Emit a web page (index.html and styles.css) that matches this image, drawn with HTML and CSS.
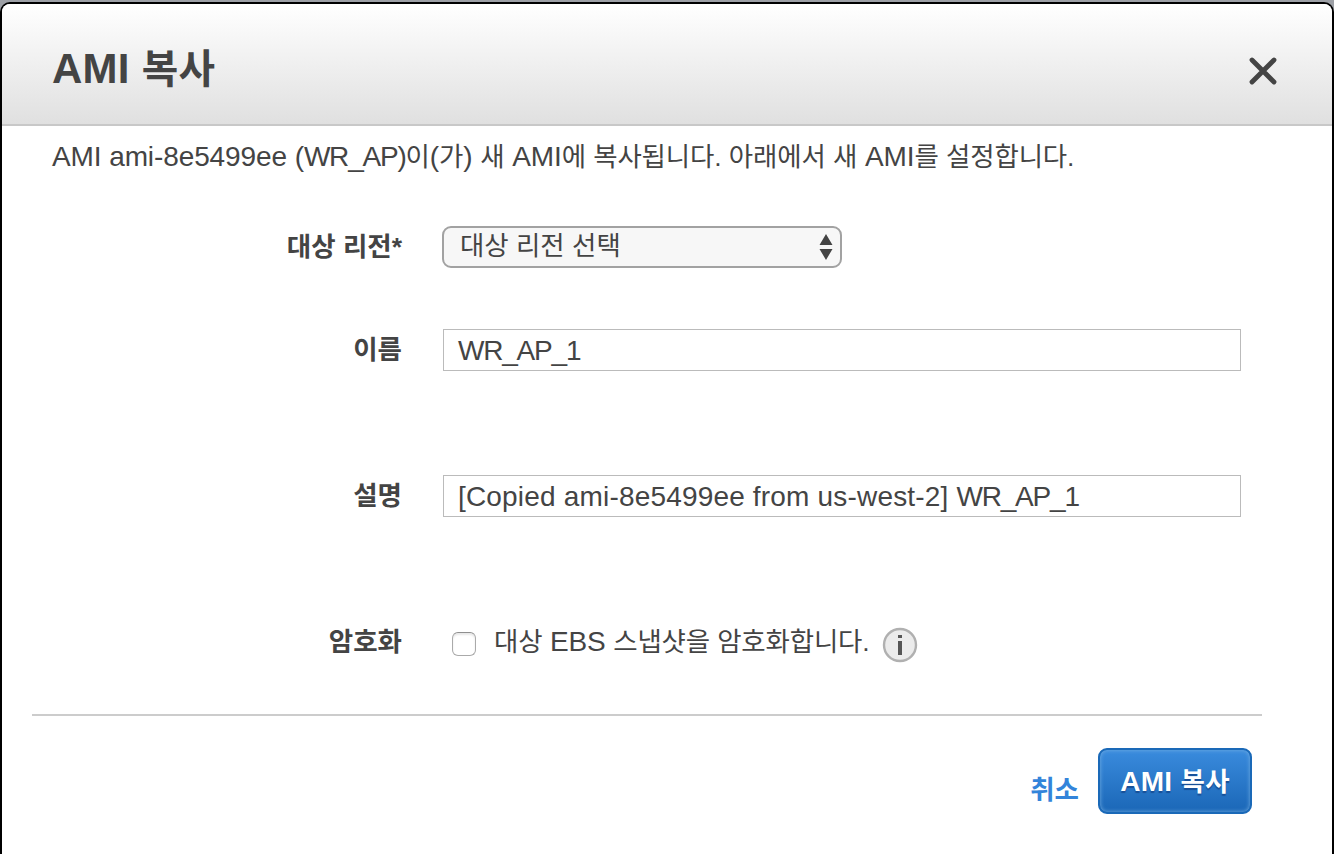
FILE: index.html
```
<!DOCTYPE html>
<html lang="ko">
<head>
<meta charset="utf-8">
<title>AMI 복사</title>
<link rel="stylesheet" href="styles.css">
</head>
<body>
<main class="dialog">
  <header class="header">
    <h1>AMI <span class="ko">복사</span></h1>
    <svg class="close" viewBox="0 0 30 30" width="30" height="30"><path d="M4 4 26 26M26 4 4 26"/></svg>
  </header>
  <p class="intro">AMI ami-8e5499ee (<span class="tight">WR_AP)</span><span class="ko">이</span>(<span class="ko">가</span>) <span class="ko">새</span> AMI<span class="ko">에 복사됩니다. 아래에서 새</span> AMI<span class="ko">를 설정합니다.</span></p>
  <div class="form">
    <div class="row region">
      <label>대상 리전*</label>
      <div class="select"><span class="ko">대상 리전 선택</span><svg width="14" height="28"><path d="M7 1 13.5 12H.5ZM.5 16H13.5L7 27Z"/></svg></div>
    </div>
    <div class="row name"><label>이름</label><div class="input"><span class="tight">WR_AP_1</span></div></div>
    <div class="row desc"><label>설명</label><div class="input"><span class="copied">[Copied ami-8e5499ee from us-west-2] <span class="tight">WR_AP_1</span></span></div></div>
    <div class="row enc"><label>암호화</label><div class="check"></div><span class="checktext"><span class="ko">대상</span> EBS <span class="ko">스냅샷을 암호화합니다.</span></span>
      <svg class="info" width="36" height="36" viewBox="0 0 36 36"><circle cx="18" cy="18" r="16"/><path d="M16 8h4v3h-4zM16 14h4v14h-4z"/></svg>
    </div>
  </div>
  <footer class="footer"><a class="cancel">취소</a><button class="submit">AMI <span class="ko">복사</span></button></footer>
</main>
</body>
</html>
```
FILE: styles.css
```
* { box-sizing: border-box; }
body { margin: 0; padding-top: 2px; background: #9da0a6; font-family: "Liberation Sans", "Noto Sans CJK KR", sans-serif; color: #444; font-size: 28px; }
.ko { font-size: 0.945em; }
.dialog { height: 852px; border: 2px solid #000; border-bottom: 0; border-radius: 10px 10px 0 0; background: #fff; overflow: hidden; }
.header { height: 122px; padding: 12px 54px 0 50px; display: flex; align-items: center; justify-content: space-between; background: linear-gradient(#fff, #e0e0e0); border-bottom: 2px solid #c8c8c8; }
h1 { margin: -2px 0 0; font-size: 42px; line-height: 60px; letter-spacing: 0.25px; }
.close { margin-top: 1px; fill: none; stroke: #444; stroke-width: 4.8; stroke-linecap: round; }
.intro { margin: 10px 0 0 50px; height: 43px; line-height: 42px; white-space: nowrap; letter-spacing: -0.1px; }
.row { display: flex; align-items: center; height: 42px; }
label { width: 400px; margin: -6px 40px 0 0; text-align: right; font-weight: bold; font-size: 26.5px; }
.region { margin-top: 47px; }
.select { width: 400px; height: 42px; border: 2px solid #a2a2a2; border-radius: 9px; background: #f7f7f7; display: flex; align-items: center; justify-content: space-between; padding: 0 7px 0 16px; }
.select span { margin-top: -7px; }
.select svg { fill: #444; }
.name { margin-top: 61px; }
.desc { margin-top: 104px; }
.enc { margin-top: 104px; }
.input { width: 798px; height: 42px; margin-left: 1px; border: 1px solid #bbb; display: flex; align-items: center; padding: 2px 0 0 14px; white-space: nowrap; }
.copied { letter-spacing: 0.18px; }
.tight { letter-spacing: -1.2px; }
.check { width: 24px; height: 24px; border: 1px solid #aaa; border-top-color: #8f8f8f; border-radius: 6px; margin: 4px 18px 0 10px; box-shadow: inset 0 2px 2px #e8e8e8; }
.checktext { margin-top: -5px; white-space: nowrap; letter-spacing: -0.15px; }
.info { margin: 6px 0 0 12px; fill: #555; }
.info circle { fill: #ebebeb; stroke: #b0b0b0; stroke-width: 2.4; }
.footer { margin: 51px 70px 0 30px; border-top: 2px solid #ccc; padding: 32px 10px 0 0; display: flex; justify-content: flex-end; align-items: center; }
.cancel { color: #3384da; font-size: 26.5px; font-weight: bold; margin: 12px 19px 0 0; }
.submit { width: 154px; height: 66px; padding: 0 0 3px; border: 2px solid #1a69b8; border-radius: 9px; background: linear-gradient(#3a8bdd, #1b67b7); box-shadow: inset 0 0 4px #74aee2; color: #fff; font: bold 28px "Liberation Sans", "Noto Sans CJK KR", sans-serif; letter-spacing: 0.3px; text-shadow: 0 2px 1px #174f97; white-space: nowrap; }
```
